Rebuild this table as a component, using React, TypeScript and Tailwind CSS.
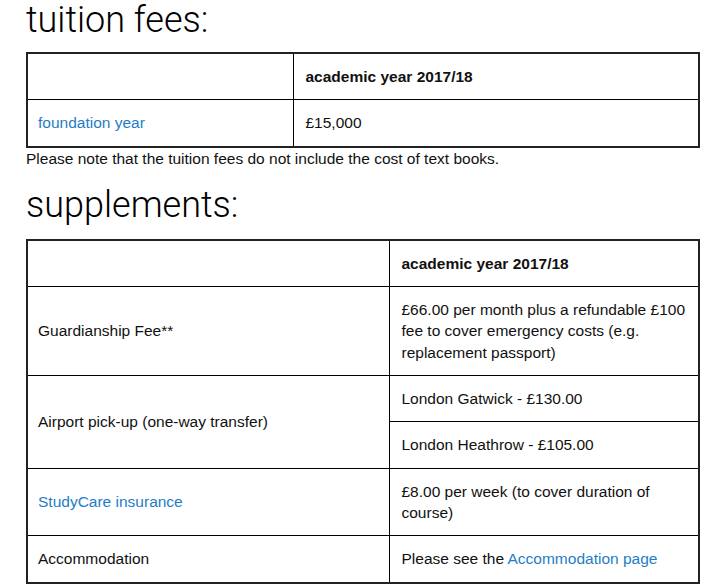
const link = "text-[#1f7dc6]"
const cell = "border border-black pt-3 pb-[11.75px]"
const left = `${cell} pl-[10px] pr-3`
const right = `${cell} pl-[12px] pr-2`
const heading = "text-[36px] font-light leading-none text-black [font-family:Roboto,'Liberation_Sans',sans-serif]"

export default function App() {
  return (
    <div className="min-h-[588px] w-[720px] bg-white pl-[26px] text-[15.5px] leading-[21.5px] text-[#111] [font-family:'Liberation_Sans',Arial,sans-serif]">
      <h2 className={`pt-[2px] ${heading}`}>tuition fees:</h2>

      <table className="mt-[14px] w-[674px] table-fixed border-collapse border-2 border-[#222]">
        <tbody>
          <tr>
            <td className={`w-[266px] ${left}`}></td>
            <td className={`${cell} px-3 font-bold`}>academic year 2017/18</td>
          </tr>
          <tr>
            <td className={`${left} ${link}`}>foundation year</td>
            <td className={`${cell} px-3`}>£15,000</td>
          </tr>
        </tbody>
      </table>
      <p className="leading-[21px]">Please note that the tuition fees do not include the cost of text books.</p>

      <h2 className={`mt-[18px] ${heading}`}>supplements:</h2>

      <table className="mt-[16px] w-[674px] table-fixed border-collapse border-2 border-[#222]">
        <tbody>
          <tr>
            <td className={`w-[362px] ${left}`}></td>
            <td className={`${right} font-bold`}>academic year 2017/18</td>
          </tr>
          <tr>
            <td className={left}>Guardianship Fee**</td>
            <td className={right}>
              £66.00 per month plus a refundable £100 fee to cover emergency costs (e.g. replacement passport)
            </td>
          </tr>
          <tr>
            <td rowSpan={2} className={left}>Airport pick-up (one-way transfer)</td>
            <td className={right}>London Gatwick - £130.00</td>
          </tr>
          <tr>
            <td className={right}>London Heathrow - £105.00</td>
          </tr>
          <tr>
            <td className={`${left} ${link}`}>StudyCare insurance</td>
            <td className={right}>£8.00 per week (to cover duration of course)</td>
          </tr>
          <tr>
            <td className={left}>Accommodation</td>
            <td className={right}>
              Please see the <span className={link}>Accommodation page</span>
            </td>
          </tr>
        </tbody>
      </table>
    </div>
  )
}
